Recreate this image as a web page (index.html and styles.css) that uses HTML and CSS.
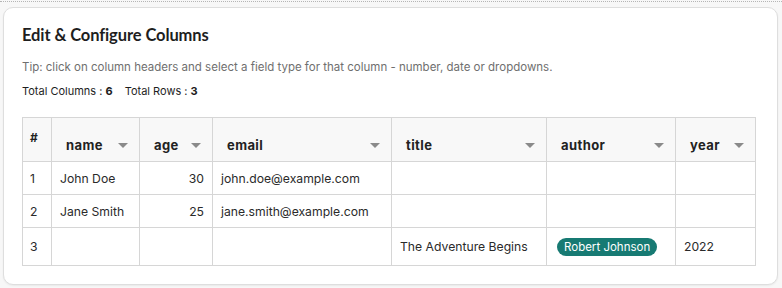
FILE: index.html
```html
<!DOCTYPE html>
<html>
<head>
<meta charset="utf-8">
<link rel="stylesheet" href="styles.css">
</head>
<body>
<div class="frame">
  <section class="card">
    <h1 class="title">Edit &amp; Configure Columns</h1>
    <p class="tip">Tip: click on column headers and select a field type for that column - number, date or dropdowns.</p>
    <p class="totals">Total Columns : <b>6</b><span class="gap"></span>Total Rows : <b>3</b></p>
    <table class="grid">
      <colgroup>
        <col class="w-idx"><col class="w-name"><col class="w-age"><col class="w-email"><col class="w-title"><col class="w-author"><col class="w-year">
      </colgroup>
      <thead>
        <tr>
          <th class="idx">#</th>
          <th><div class="hd"><span>name</span><i class="caret"></i></div></th>
          <th><div class="hd"><span>age</span><i class="caret"></i></div></th>
          <th><div class="hd"><span>email</span><i class="caret"></i></div></th>
          <th><div class="hd"><span>title</span><i class="caret"></i></div></th>
          <th><div class="hd"><span>author</span><i class="caret"></i></div></th>
          <th><div class="hd"><span>year</span><i class="caret"></i></div></th>
        </tr>
      </thead>
      <tbody>
        <tr><td>1</td><td>John Doe</td><td class="num">30</td><td>john.doe@example.com</td><td></td><td></td><td></td></tr>
        <tr><td>2</td><td>Jane Smith</td><td class="num">25</td><td>jane.smith@example.com</td><td></td><td></td><td></td></tr>
        <tr class="tall"><td>3</td><td></td><td></td><td></td><td>The Adventure Begins</td><td><span class="badge">Robert Johnson</span></td><td>2022</td></tr>
      </tbody>
    </table>
  </section>
</div>
</body>
</html>
```
FILE: styles.css
```css
html, body {
  margin: 0;
  padding: 0;
  background: #f7f7f7;
}
body {
  font-family: "Inter", "Noto Sans", sans-serif;
  color: #222;
}
.frame {
  border-top: 1px dotted #b5b5b5;
  margin-top: 1px;
  padding: 5px 4px 4px 3px;
}
.card {
  background: #fff;
  border: 1px solid #dedede;
  border-radius: 10px;
  box-shadow: 0 1px 2px rgba(0,0,0,0.06);
  padding: 16px 18px 17px 18px;
  height: 243px;
}
.title {
  font-family: "Lato", sans-serif;
  font-weight: 700;
  font-size: 16.5px;
  line-height: 22px;
  margin: 0;
  color: #1e1e1e;
  letter-spacing: -0.1px;
}
.tip {
  margin: 13px 0 0 0;
  font-size: 11.5px;
  line-height: 16px;
  color: #6f6f6f;
}
.totals {
  margin: 8px 0 0 0;
  font-size: 11px;
  line-height: 16px;
  color: #1e1e1e;
}
.totals b { font-weight: 700; }
.gap { display: inline-block; width: 12px; }
.grid {
  margin-top: 18px;
  border-collapse: collapse;
  width: 733px;
  table-layout: fixed;
  font-size: 12.2px;
}
.w-idx { width: 29px; }
.w-name { width: 88px; }
.w-age { width: 73px; }
.w-email { width: 179px; }
.w-title { width: 155px; }
.w-author { width: 129px; }
.w-year { width: 80px; }
.grid th, .grid td {
  border: 1px solid #d6d6d6;
}
.grid thead tr { height: 44px; }
.grid thead th {
  background: #f8f8f8;
  padding: 11px 11px 0 14px;
  text-align: left;
  font-weight: 700;
  font-size: 13px;
  letter-spacing: 0.4px;
  color: #222;
}
.grid th.idx {
  padding: 12px 0 0 7px;
  vertical-align: top;
  font-size: 12px;
}
.hd {
  display: flex;
  align-items: center;
  justify-content: space-between;
}
.caret {
  display: inline-block;
  width: 0;
  height: 0;
  border-left: 5px solid transparent;
  border-right: 5px solid transparent;
  border-top: 5px solid #8a8a8a;
}
.grid tbody tr { height: 33px; }
.grid tbody tr.tall { height: 38px; }
.grid td {
  padding: 0 8px;
  color: #2a2a2a;
  white-space: nowrap;
}
.grid td:first-child { padding-left: 7px; }
.grid td.num { text-align: right; }
.badge {
  display: inline-block;
  background: #177a73;
  color: #fff;
  border-radius: 9px;
  padding: 0 7px;
  line-height: 18px;
  font-size: 11.5px;
  margin-left: 2px;
}
```
